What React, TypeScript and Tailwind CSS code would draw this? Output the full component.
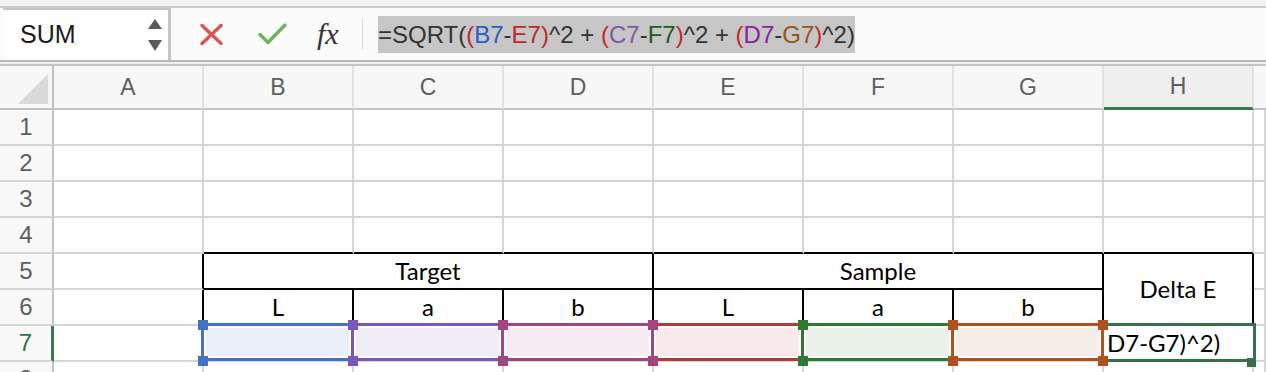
import { FC, ReactNode } from 'react'

const COLS = [`A`, `B`, `C`, `D`, `E`, `F`, `G`, `H`]

interface IRange {
  border: string
  fill: string
  z: string
}

const RANGES: Record<string, IRange> = {
  B: { border: `border-[#4472c4]`, fill: `bg-[#ebeff9]`, z: `z-[2]` },
  C: { border: `border-[#7c56b4]`, fill: `bg-[#f1edf8]`, z: `z-[2]` },
  D: { border: `border-[#a4457f]`, fill: `bg-[#f6ebf2]`, z: `z-[2]` },
  E: { border: `border-[#ae3d3d]`, fill: `bg-[#f8eaea]`, z: `z-[1]` },
  F: { border: `border-[#2f7a32]`, fill: `bg-[#e9f1e8]`, z: `z-[2]` },
  G: { border: `border-[#b0521f]`, fill: `bg-[#f7ede7]`, z: `z-[2]` },
}

const HANDLE_BG: Record<string, string> = {
  B: `bg-[#4472c4]`,
  C: `bg-[#7c56b4]`,
  D: `bg-[#a4457f]`,
  E: `bg-[#ae3d3d]`,
  F: `bg-[#2f7a32]`,
  G: `bg-[#b0521f]`,
}

const cellText = `font-['Lato',sans-serif] text-[24px] text-black`

interface ICellProps {
  right?: boolean
  bottom?: boolean
  className?: string
  children?: ReactNode
}

const Cell: FC<ICellProps> = ({ right, bottom, className, children }) => (
  <div
    className={`border-r-2 border-b-2 bg-white ${
      right ? `border-r-black` : `border-r-[#d5d5d5]`
    } ${bottom ? `border-b-black` : `border-b-[#d5d5d5]`} ${className ?? ``}`}
  >
    {children}
  </div>
)

const RangeCell: FC<{ col: string }> = ({ col }) => {
  const r = RANGES[col]
  const h = `absolute w-[10px] h-[10px] ${HANDLE_BG[col]} ${r.z}`
  return (
    <Cell className="relative">
      <div
        className={`absolute left-[-3px] top-[-3px] w-[153px] h-[38px] border-[3px] p-[2px] ${r.border} ${r.z}`}
      >
        <div className={`h-full ${r.fill}`} />
      </div>
      <div className={`${h} left-[-6px] top-[-6px]`} />
      <div className={`${h} left-[144px] top-[-6px]`} />
      <div className={`${h} left-[-6px] top-[30px]`} />
      <div className={`${h} left-[144px] top-[30px]`} />
    </Cell>
  )
}

const Formula: FC = () => {
  const red = `text-[#c0282a]`
  return (
    <div className="self-center h-[37px] bg-[#c6c6c6] font-['Liberation_Sans',Arial,sans-serif] text-[24px] leading-[37px] text-[#333] whitespace-nowrap">
      =SQRT(<span className={red}>(</span>
      <span className="text-[#2a5bc6]">B7</span>-
      <span className={red}>E7</span>
      <span className={red}>)</span>^2 + <span className={red}>(</span>
      <span className="text-[#7e5aa3]">C7</span>-
      <span className="text-[#1f5a1f]">F7</span>
      <span className={red}>)</span>^2 + <span className={red}>(</span>
      <span className="text-[#8a22a0]">D7</span>-
      <span className="text-[#9a5414]">G7</span>
      <span className={red}>)</span>^2)
    </div>
  )
}

const FormulaBar: FC = () => (
  <div className="flex h-[52px] bg-[#fbfbfb]">
    <div className="ml-[3px] w-[168px] flex items-center justify-between bg-white border-t-2 border-r-[3px] border-[#c6c6c6] pl-[17px] pr-[6px]">
      <span className="font-['Liberation_Sans',Arial,sans-serif] text-[25px] text-[#1a1a1a]">
        SUM
      </span>
      <svg width="14" height="32" viewBox="0 0 14 32">
        <polygon points="7,0 14,10 0,10" fill="#5a5a5a" />
        <polygon points="0,21 14,21 7,32" fill="#5a5a5a" />
      </svg>
    </div>
    <div className="flex items-center">
      <svg width="23" height="21" viewBox="0 0 23 21" className="ml-[29px]">
        <path
          d="M2 1.5 L21 19.5 M21 1.5 L2 19.5"
          stroke="#db5652"
          strokeWidth="3.4"
          strokeLinecap="round"
        />
      </svg>
      <svg width="29" height="22" viewBox="0 0 29 22" className="ml-[35px]">
        <path
          d="M2 11.5 L10 19.5 L27 2"
          fill="none"
          stroke="#6cb35b"
          strokeWidth="3.4"
          strokeLinecap="round"
          strokeLinejoin="round"
        />
      </svg>
      <span className="ml-[30px] w-[32px] font-['Liberation_Serif',serif] italic text-[30px] leading-none text-[#333]">
        fx
      </span>
      <div className="ml-[13px] w-px h-[30px] bg-[#d8d8d8]" />
    </div>
    <div className="ml-[15px] flex">
      <Formula />
    </div>
  </div>
)

const headerText = `font-['Liberation_Sans',Arial,sans-serif] text-[23px] text-[#5e5e5e]`

const Sheet: FC = () => {
  const rows = [1, 2, 3, 4, 5, 6, 7, 8]
  return (
    <div className="grid grid-cols-[54px_repeat(8,150px)_1fr] grid-rows-[44px_repeat(8,36px)]">
      {/* corner */}
      <div className="relative bg-[#f7f7f7] border-r-2 border-b-2 border-[#c2c2c2]">
        <svg
          width="32"
          height="32"
          viewBox="0 0 32 32"
          className="absolute left-[17px] top-[7px]"
        >
          <polygon points="31,1 31,31 1,31" fill="#d9d9d9" />
        </svg>
      </div>
      {COLS.map((c) => (
        <div
          key={c}
          className={`flex items-center justify-center border-r-2 border-r-[#e2e2e2] ${
            c === `H`
              ? `bg-[#efefef] border-b-[3px] border-b-[#3a7a4c]`
              : `bg-[#f7f7f7] border-b-2 border-b-[#c2c2c2]`
          }`}
        >
          <span className={`${headerText} ${c === `H` ? `text-[#2f7447]` : ``}`}>
            {c}
          </span>
        </div>
      ))}
      <div className="bg-[#f7f7f7] border-b-2 border-b-[#c2c2c2]" />

      {rows.map((r) => {
        const rowHead = (
          <div
            key={`h${r}`}
            className={`flex items-center justify-center bg-[#f8f8f8] border-b-2 border-b-[#d5d5d5] ${
              r === 7
                ? `border-r-[3px] border-r-[#3a7a4c]`
                : `border-r-2 border-r-[#c2c2c2]`
            }`}
          >
            <span
              className={`font-['Liberation_Sans',Arial,sans-serif] text-[24px] ${
                r === 7 ? `text-[#2f7447]` : `text-[#5e5e5e]`
              }`}
            >
              {r}
            </span>
          </div>
        )

        if (r === 5) {
          return [
            rowHead,
            <Cell key="a5" right />,
            <Cell
              key="b5"
              right
              bottom
              className={`col-span-3 flex items-center justify-center ${cellText}`}
            >
              Target
            </Cell>,
            <Cell
              key="e5"
              right
              bottom
              className={`col-span-3 flex items-center justify-center ${cellText}`}
            >
              Sample
            </Cell>,
            <Cell
              key="h5"
              right
              bottom
              className={`row-span-2 flex items-center justify-center ${cellText}`}
            >
              Delta E
            </Cell>,
            <Cell key="i5" />,
          ]
        }

        if (r === 6) {
          return [
            rowHead,
            <Cell key="a6" right />,
            ...[`L`, `a`, `b`, `L`, `a`, `b`].map((t, i) => (
              <Cell
                key={`c6${i}`}
                right
                bottom
                className={`flex items-center justify-center ${cellText}`}
              >
                {t}
              </Cell>
            )),
            <Cell key="i6" />,
          ]
        }

        if (r === 7) {
          return [
            rowHead,
            <Cell key="a7" />,
            ...[`B`, `C`, `D`, `E`, `F`, `G`].map((c) => (
              <RangeCell key={`r${c}`} col={c} />
            )),
            <Cell key="h7" className="relative">
              <div className="absolute left-[-3px] top-[-3px] w-[155px] h-[39px] border-[3px] border-[#3a7049] bg-white z-[1] flex items-center pl-[3px] overflow-hidden">
                <span className={`${cellText} whitespace-nowrap`}>
                  D7-G7)^2)
                </span>
              </div>
              <div className="absolute left-[143px] top-[32px] w-[9px] h-[9px] bg-[#3a7049] z-[1]" />
            </Cell>,
            <Cell key="i7" />,
          ]
        }

        return [
          rowHead,
          ...COLS.map((c) => (
            <Cell key={`${c}${r}`} bottom={r === 4 && c !== `A`} />
          )),
          <Cell key={`i${r}`} />,
        ]
      })}
    </div>
  )
}

const App: FC = () => (
  <div className="w-[1266px] h-[372px] overflow-hidden bg-white">
    <div className="h-[8px] bg-[#f3f3f3] border-b-2 border-[#cbcbcb]" />
    <FormulaBar />
    <div className="h-[6px] bg-[#f0f0f0] border-t-2 border-b-2 border-t-[#b8b8b8] border-b-[#c4c4c4]" />
    <Sheet />
  </div>
)

export default App
